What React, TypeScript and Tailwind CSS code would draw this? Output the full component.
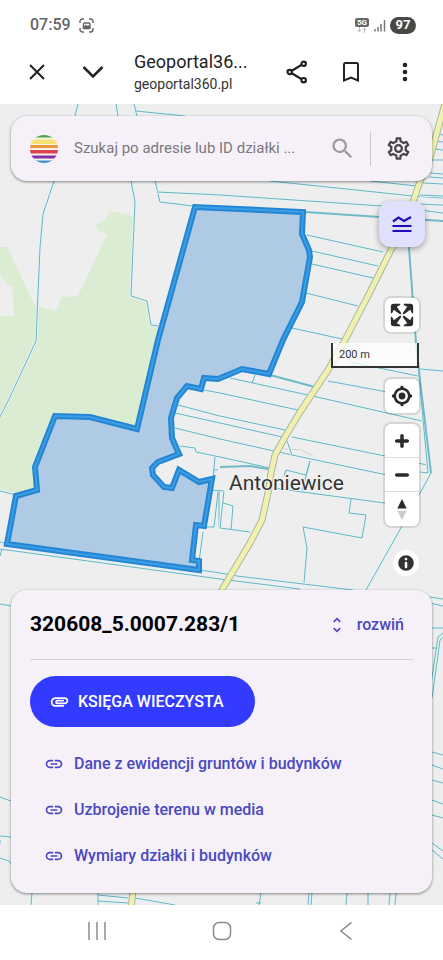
import React from "react";
import { MdAttachment, MdLink, MdSearch, MdUnfoldMore, MdOutlineSettings } from "react-icons/md";

const PARCEL =
  "M195 207L158 340L137 429L90 417L55 416L35 467L37 490L16 496L7 544L199 570V561L192 560L196 525L204 526L212 479L199 482L179 470L172 488L164 487L153 475L152 468L158 462L179 454L172 438L171 418L177 398L187 386L201 389L204 378L218 379L242 369L269 374L283 340L302 302L310 257L309 250L302 234L303 212Z";

const ROAD =
  "M446 100L428 165L420 181L413 202L392 248L367 298L345 340L328 370L300 412L285 437L275 455L271 473L268 493L262 520L250 543L223 588L180 680L134 880L131 910";

const BOUNDARIES = [
  // west
  "M78 104L75 116L54 181L43 214L40 247L36 341L10 397L0 417",
  "M116 104L118 116L131 181L135 202L131 296L147 301L151 325L158 326",
  "M134 104L137 116L155 181L160 202L193 206",
  "M136 111L185 116L270 181L413 196L443 198",
  "M157 192L220 195L397 207L443 213",
  "M0 491L16 495M0 542L8 544M2 549L0 556M0 549L220 579L300 589",
  // north east
  "M370 181L417 186M423 183L443 184M420 195L443 196M418 204L443 205",
  "M438 134L443 135M436 141L443 142M435 149L443 150M433 160L443 160M430 173L443 174M429 177L443 178",
  "M307 235L383 252M312 251L378 266M312 264L373 278M306 293L358 306M292 328L342 339",
  // strips along the road
  "M270 375L315 387M230 378L317 397L422 421M255 375L252 383",
  "M204 390L220 393L298 410M178 405L220 416L285 430M175 413L220 423L282 437",
  "M175 428L220 439L292 455L387 475M180 446L195 448L196 452L220 457L270 468",
  "M292 437L385 456L427 465M328 381L387 392M350 362L418 376M420 369L443 371",
  "M215 457L213 479M213 470H218M210 490L224 491M205 527H214L218 492M219 491V527",
  "M224 491L220 528L250 532M223 503L233 506L231 530M284 476L286 470L306 475L310 461L302 492M287 441L292 455",
  "M274 488L302 492L385 503M351 499L349 513L366 515L362 538L303 527L307 548L304 583",
  "M203 532L199 562L200 570L220 573L237 576L353 590",
  "M420 472L428 473L416 343M431 473L419 495L402 526L366 590",
  // south and the edges
  "M0 604L11 606M0 797L11 801M0 836L11 837M0 840V844M0 858L9 861L12 865",
  "M430 597L443 599M430 603L443 606M430 628H443M432 648H437M443 637L440 640L432 698M443 633L438 637L431 684",
  "M432 752L443 755M432 765L443 769M432 780L443 783M432 800L443 804M432 815L443 818M432 843L443 851M432 850L443 859",
  "M32 893L31 905M98 893V905M98 895L128 898M98 901L128 903M135 898L175 905M261 893L259 905M256 903H261",
  "M309 893L308 905M312 893L311 905M347 893L346 905M368 893V905M390 893L389 905M396 893L395 905",
];

const LINKS = ["Dane z ewidencji gruntów i budynków", "Uzbrojenie terenu w media", "Wymiary działki i budynków"];

const MAP_BUTTON = "flex h-[34px] w-[34px] items-center justify-center text-[#2b2b2b]";
const MAP_GROUP = "overflow-hidden rounded-md bg-white shadow-[0_0_0_2px_rgba(0,0,0,0.1)]";

const ParcelMap: React.FC = () => (
  <svg
    className="absolute inset-0 h-full w-full"
    viewBox="0 104 443 801"
    preserveAspectRatio="xMidYMid slice"
    role="img"
    aria-label="Mapa działek"
  >
    <rect x="0" y="104" width="443" height="801" fill="#eeeeee" />
    <path
      fill="#daecd2"
      d="M0 247H7L33 302L36 306L56 311L62 297L78 296L107 235L97 230L96 225L105 220L110 211L134 216L131 296L147 301L151 325L158 326V340L137 429L90 417L55 416L35 467L37 490L16 496L0 491V316H14L13 287L6 283L0 275Z"
    />
    <path d="M284 449L302 450L308 454L313 455" fill="none" stroke="#d3d3d3" strokeWidth="1" />
    {BOUNDARIES.map((d) => (
      <g key={d} fill="none">
        <path d={d} stroke="#e4f3f5" strokeWidth="3" />
        <path d={d} stroke="#6db3c0" strokeWidth="1" />
      </g>
    ))}
    <path
      d="M305 212L380 217L443 221M220 467L250 466L268 469M270 375L315 387M409 215L409 248L416 343L420 380L431 473"
      fill="none"
      stroke="#70bac7"
      strokeWidth="2"
    />
    <g fill="none" strokeLinejoin="round">
      <path d={ROAD} stroke="#a5b9a0" strokeWidth="7" />
      <path d={ROAD} stroke="#f2f0b0" strokeWidth="5" />
    </g>
    <path d={PARCEL} fill="#aecae5" stroke="#2386d4" strokeWidth="6" />
    <path d={PARCEL} fill="none" stroke="#3d9de2" strokeWidth="2" />
    <text
      x="229"
      y="490"
      fontSize="21"
      fill="#333333"
      stroke="#f2f2f2"
      strokeWidth="2"
      paintOrder="stroke"
    >
      Antoniewice
    </text>
  </svg>
);

const StatusBar: React.FC = () => (
  <div className="flex h-[50px] items-center justify-between pr-[27px] pl-[30px] text-[#666]">
    <div className="flex items-center gap-2">
      <span className="text-[16px] font-medium">07:59</span>
      <svg width="15" height="15" viewBox="0 0 15 15" fill="none" stroke="currentColor" strokeWidth="1.4">
        <path d="M1 5V3.5A2.5 2.5 0 0 1 3.500 1H5M10 1h1.500A2.500 2.500 0 0 1 14 3.500V5M14 10v1.500A2.500 2.500 0 0 1 11.500 14H10M5 14H3.500A2.500 2.500 0 0 1 1 11.500V10" />
        <rect x="4.500" y="5" width="6.500" height="5.500" rx="1" />
        <path d="M5 9.500l2-2 1.300 1.200 1-.8 1.500 1.600z" fill="currentColor" />
      </svg>
    </div>
    <div className="flex items-center gap-1">
      <div className="flex flex-col items-center">
        <span className="rounded-xs bg-[#666] px-[2px] text-[8px] leading-[9px] font-bold text-white">5G</span>
        <svg width="12" height="6" viewBox="0 0 12 6" fill="none" stroke="#bbb">
          <path d="M3.500 0v5M1.500 3l2 2 2-2M8.500 6V1M6.500 3l2-2 2 2" />
        </svg>
      </div>
      <svg width="13" height="13" viewBox="0 0 13 13" stroke="#777" strokeWidth="1.500">
        <path d="M2 10v2.500M5 8v4.500M8 5v7.500M11.500 1v11.500" />
      </svg>
      <span className="flex h-[17px] w-[26px] items-center justify-center rounded-full bg-[#484848] text-[13px] font-bold text-white">
        97
      </span>
    </div>
  </div>
);

const BrowserBar: React.FC = () => (
  <div className="flex h-[44px] items-center pr-[18px] pl-[17px] text-[#222]">
    <button aria-label="Zamknij" className="flex h-10 w-10 items-center justify-center">
      <svg width="18" height="18" viewBox="0 0 18 18" stroke="currentColor" strokeWidth="2">
        <path d="M2 2l14 14M16 2L2 16" />
      </svg>
    </button>
    <button aria-label="Minimalizuj" className="ml-4 flex h-10 w-10 items-center justify-center">
      <svg width="22" height="14" viewBox="0 0 22 14" fill="none" stroke="currentColor" strokeWidth="2.500">
        <path d="M1.500 2l9.500 9.500L20.500 2" />
      </svg>
    </button>
    <div className="ml-[21px] min-w-0 flex-1">
      <div className="text-[18px] leading-[24px] whitespace-nowrap">Geoportal36...</div>
      <div className="text-[14px] leading-[20px] text-[#333]">geoportal360.pl</div>
    </div>
    <div className="flex gap-[14px]">
      <button aria-label="Udostępnij" className="flex h-10 w-10 items-center justify-center">
        <svg width="22" height="24" viewBox="0 0 22 24" fill="none" stroke="currentColor" strokeWidth="2.200">
          <path d="M5.800 10.800l9.500-5.800M5.800 13.200l9.500 5.800" />
          <circle cx="3.700" cy="12" r="2.200" />
          <circle cx="17.700" cy="3.800" r="2.200" />
          <circle cx="17.700" cy="20.200" r="2.200" />
        </svg>
      </button>
      <button aria-label="Zakładka" className="flex h-10 w-10 items-center justify-center">
        <svg width="18" height="22" viewBox="0 0 18 22" fill="none" stroke="currentColor" strokeWidth="2">
          <path d="M2 3.500Q2 2 3.500 2H14.500Q16 2 16 3.500V19.500L9 16.500 2 19.500Z" />
        </svg>
      </button>
      <button aria-label="Więcej" className="flex h-10 w-10 items-center justify-center">
        <svg width="6" height="20" viewBox="0 0 6 20" fill="currentColor">
          <circle cx="3" cy="3" r="2.300" />
          <circle cx="3" cy="10" r="2.300" />
          <circle cx="3" cy="17" r="2.300" />
        </svg>
      </button>
    </div>
  </div>
);

const Logo: React.FC = () => (
  <svg width="28" height="28" viewBox="0 0 28 28" className="shrink-0">
    <clipPath id="logo-disc">
      <circle cx="14" cy="14" r="14" />
    </clipPath>
    <g clipPath="url(#logo-disc)">
      <rect width="28" height="28" fill="#fbf3e8" />
      <rect width="28" height="2.500" fill="#4ca64c" />
      <rect y="4.500" width="28" height="4.500" fill="#f6e274" />
      <rect y="10" width="28" height="3" fill="#e8963a" />
      <rect y="15" width="28" height="3.500" fill="#dd4450" />
      <rect y="20.500" width="28" height="3" fill="#7e31a6" />
      <rect y="25.500" width="28" height="2.500" fill="#3f8fd0" />
    </g>
  </svg>
);

const SearchBar: React.FC = () => (
  <div className="flex h-[65px] items-center rounded-2xl bg-[#f6f1f8] pr-[20px] pl-[19px] shadow-[0_1px_3px_rgba(0,0,0,0.45)]">
    <Logo />
    <input
      type="text"
      aria-label="Szukaj"
      placeholder="Szukaj po adresie lub ID działki ..."
      className="ml-4 min-w-0 flex-1 bg-transparent text-[15px] text-[#333] outline-none placeholder:text-[#7b787d]"
    />
    <button aria-label="Wyszukaj" className="text-[#9c999e]">
      <MdSearch size={27} />
    </button>
    <div className="mr-[14px] ml-[14px] h-[34px] w-px bg-[#ccc8ce]" />
    <button aria-label="Ustawienia" className="text-[#48464c]">
      <MdOutlineSettings size={27} />
    </button>
  </div>
);

const MapControls: React.FC = () => (
  <div className="flex flex-col items-end pt-5 pr-[13px]">
    <button
      aria-label="Warstwy"
      className="-mr-[6px] flex h-[46px] w-[46px] items-center justify-center rounded-xl bg-[#dfe0fc] text-[#1b10b8] shadow-[0_2px_6px_rgba(0,0,0,0.35)]"
    >
      <svg width="20" height="18" viewBox="0 0 20 18" fill="none" stroke="currentColor" strokeWidth="2.200">
        <path d="M1 6.500L6.500 2.500L12 6L19 2M0.500 11H19.500M0.500 16H19.500" />
      </svg>
    </button>

    <div className={`mt-[51px] ${MAP_GROUP}`}>
      <button aria-label="Pełny ekran" className={MAP_BUTTON}>
        <svg width="34" height="34" viewBox="0 0 29 29" fill="currentColor">
          <path d="M24 16v5.500c0 1.750-.75 2.500-2.500 2.500H16v-1l3-1.500-4-5.500 1-1 5.500 4 1.500-3h1zM6 16l1.500 3 5.500-4 1 1-4 5.500 3 1.500v1H7.500C5.750 24 5 23.250 5 21.500V16h1zm7-11v1l-3 1.500 4 5.500-1 1-5.500-4L6 13H5V7.500C5 5.750 5.750 5 7.500 5H13zm11 2.500c0-1.750-.75-2.500-2.500-2.500H16v1l3 1.500-4 5.500 1 1 5.500-4 1.500 3h1V7.500z" />
        </svg>
      </button>
    </div>

    <div className="mt-[11px] h-[25px] w-[88px] border-2 border-t-0 border-[#333] bg-white/75 px-[6px] text-[11px] leading-[23px] text-[#333]">
      200 m
    </div>

    <div className={`mt-[11px] ${MAP_GROUP}`}>
      <button aria-label="Moja lokalizacja" className={MAP_BUTTON}>
        <svg width="34" height="34" viewBox="0 0 20 20" fill="currentColor">
          <path d="M10 4C9 4 9 5 9 5v.1A5 5 0 0 0 5.100 9H5s-1 0-1 1 1 1 1 1h.1A5 5 0 0 0 9 14.900v.1s0 1 1 1 1-1 1-1v-.1a5 5 0 0 0 3.900-3.900h.1s1 0 1-1-1-1-1-1h-.1A5 5 0 0 0 11 5.100V5s0-1-1-1zm0 2.500a3.500 3.500 0 1 1 0 7 3.500 3.500 0 1 1 0-7z" />
          <circle cx="10" cy="10" r="2" />
        </svg>
      </button>
    </div>

    <div className={`mt-[11px] divide-y divide-[#ddd] ${MAP_GROUP}`}>
      <button aria-label="Przybliż" className={MAP_BUTTON}>
        <svg width="34" height="34" viewBox="0 0 29 29" fill="currentColor">
          <path d="M14.500 8.500c-.75 0-1.500.75-1.500 1.500v3h-3c-.75 0-1.500.75-1.500 1.500S9.250 16 10 16h3v3c0 .75.75 1.500 1.500 1.500S16 19.750 16 19v-3h3c.75 0 1.500-.75 1.500-1.500S19.750 13 19 13h-3v-3c0-.75-.75-1.500-1.500-1.500z" />
        </svg>
      </button>
      <button aria-label="Oddal" className={MAP_BUTTON}>
        <svg width="34" height="34" viewBox="0 0 29 29" fill="currentColor">
          <path d="M10 13c-.75 0-1.500.75-1.500 1.500S9.250 16 10 16h9c.75 0 1.500-.75 1.500-1.500S19.750 13 19 13h-9z" />
        </svg>
      </button>
      <button aria-label="Północ" className={MAP_BUTTON}>
        <svg width="34" height="34" viewBox="0 0 29 29" fill="currentColor">
          <path d="m10.500 14 4-8 4 8h-8z" />
          <path d="m10.500 16 4 8 4-8h-8z" fill="#ccc" />
        </svg>
      </button>
    </div>

    <button aria-label="Informacje" className="mt-6 rounded-full bg-white text-[#333]">
      <svg width="26" height="26" viewBox="0 0 20 20" fill="currentColor" fillRule="evenodd">
        <path d="M4 10a6 6 0 1 0 12 0 6 6 0 1 0-12 0m5-3a1 1 0 1 0 2 0 1 1 0 1 0-2 0m0 3a1 1 0 1 1 2 0v3a1 1 0 1 1-2 0" />
      </svg>
    </button>
  </div>
);

const ParcelCard: React.FC = () => (
  <section className="rounded-2xl bg-[#f6f1f8] px-[19px] pb-[14px] shadow-[0_1px_3px_rgba(0,0,0,0.45)]">
    <div className="flex h-[70px] items-center justify-between border-b border-[#d6d2d9]">
      <h1 className="text-[21px] font-bold text-black">320608_5.0007.283/1</h1>
      <button className="mr-[9px] flex items-center gap-[10px] text-[16px] font-medium text-[#4a48c2]">
        <MdUnfoldMore size={20} />
        rozwiń
      </button>
    </div>
    <button className="mt-4 flex h-[51px] items-center gap-2 rounded-full bg-[#333bff] pr-[31px] pl-[19px] text-[16px] font-medium text-white">
      <MdAttachment size={21} />
      KSIĘGA WIECZYSTA
    </button>
    <ul className="mt-[14px]">
      {LINKS.map((label) => (
        <li key={label}>
          <a href="#" className="flex h-[46px] items-center gap-[10px] pl-[14px] text-[16px] font-medium text-[#4a48c2]">
            <MdLink size={20} />
            {label}
          </a>
        </li>
      ))}
    </ul>
  </section>
);

const SystemNav: React.FC = () => (
  <nav className="flex h-[55px] items-center justify-between bg-white px-[73px] pb-[3px] text-[#8c8c8c]">
    <button aria-label="Ostatnie" className="flex h-12 w-12 items-center justify-center">
      <svg width="18" height="18" viewBox="0 0 18 18" stroke="currentColor" strokeWidth="1.500">
        <path d="M1 0v18M9 0v18M17 0v18" />
      </svg>
    </button>
    <button aria-label="Ekran główny" className="flex h-12 w-12 items-center justify-center">
      <svg width="20" height="20" viewBox="0 0 20 20" fill="none" stroke="currentColor" strokeWidth="1.500">
        <rect x="1.500" y="1.500" width="17" height="17" rx="5.500" />
      </svg>
    </button>
    <button aria-label="Wstecz" className="flex h-12 w-12 items-center justify-center">
      <svg width="12" height="18" viewBox="0 0 12 18" fill="none" stroke="currentColor" strokeWidth="1.500">
        <path d="M11.500 0.500L1 9l10.500 8.500" />
      </svg>
    </button>
  </nav>
);

export default function App() {
  return (
    <div className="flex min-h-screen flex-col bg-white font-['Roboto','Liberation_Sans',sans-serif]">
      <header className="h-[104px] bg-white">
        <StatusBar />
        <BrowserBar />
      </header>
      <main className="relative flex flex-1 flex-col overflow-hidden">
        <ParcelMap />
        <div className="relative flex flex-1 flex-col justify-between px-[11px] pt-3 pb-3">
          <div>
            <SearchBar />
            <MapControls />
          </div>
          <ParcelCard />
        </div>
      </main>
      <SystemNav />
    </div>
  );
}
